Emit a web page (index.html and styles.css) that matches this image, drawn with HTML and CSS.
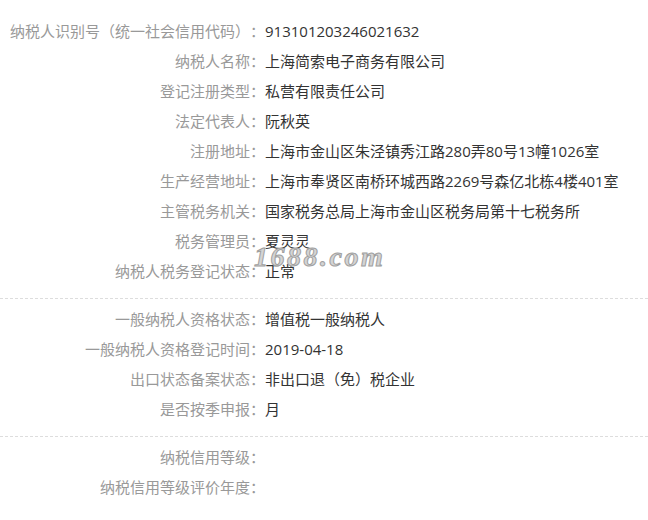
FILE: index.html
```html
<!DOCTYPE html>
<html lang="zh-CN">
<head>
  <meta charset="UTF-8" />
  <title>纳税人信息</title>
  <link rel="stylesheet" href="styles.css">
</head>
<body>

<div class="info">

  <div class="group">
    <div class="row"><span class="label">纳税人识别号（统一社会信用代码）：</span><span class="value">913101203246021632</span></div>
    <div class="row"><span class="label">纳税人名称：</span><span class="value">上海简索电子商务有限公司</span></div>
    <div class="row"><span class="label">登记注册类型：</span><span class="value">私营有限责任公司</span></div>
    <div class="row"><span class="label">法定代表人：</span><span class="value">阮秋英</span></div>
    <div class="row"><span class="label">注册地址：</span><span class="value">上海市金山区朱泾镇秀江路280弄80号13幢1026室</span></div>
    <div class="row"><span class="label">生产经营地址：</span><span class="value">上海市奉贤区南桥环城西路2269号森亿北栋4楼401室</span></div>
    <div class="row"><span class="label">主管税务机关：</span><span class="value">国家税务总局上海市金山区税务局第十七税务所</span></div>
    <div class="row"><span class="label">税务管理员：</span><span class="value">夏灵灵</span></div>
    <div class="row"><span class="label">纳税人税务登记状态：</span><span class="value">正常</span></div>
    <div class="watermark">1688.com</div>
  </div>

  <div class="group">
    <div class="row"><span class="label">一般纳税人资格状态：</span><span class="value">增值税一般纳税人</span></div>
    <div class="row"><span class="label">一般纳税人资格登记时间：</span><span class="value">2019-04-18</span></div>
    <div class="row"><span class="label">出口状态备案状态：</span><span class="value">非出口退（免）税企业</span></div>
    <div class="row"><span class="label">是否按季申报：</span><span class="value">月</span></div>
  </div>

  <div class="group last">
    <div class="row"><span class="label">纳税信用等级：</span><span class="value"></span></div>
    <div class="row"><span class="label">纳税信用等级评价年度：</span><span class="value"></span></div>
  </div>

</div>

</body>
</html>
```

FILE: styles.css
```css
body {
  margin: 0;
  background-color: #ffffff;
  font-family: "Open Sans", "Noto Sans CJK SC", sans-serif;
  font-size: 15px;
  color: #333333;
  text-spacing-trim: space-all;
}

.info {
  width: 648px;
  padding-top: 16px;
}

.group {
  position: relative;
  padding-bottom: 12px;
  margin-bottom: 5px;
  border-bottom: 1px dashed #dddddd;
}

.group.last {
  border-bottom: none;
}

.row {
  display: flex;
  height: 30px;
  line-height: 30px;
}

.label {
  width: 265px;
  text-align: right;
  color: #999999;
  white-space: nowrap;
}

.value {
  color: #333333;
  white-space: nowrap;
}

.watermark {
  position: absolute;
  left: 254px;
  top: 226px;
  font-family: "Liberation Serif", serif;
  font-style: italic;
  font-weight: bold;
  font-size: 28px;
  line-height: 30px;
  letter-spacing: 2.5px;
  color: #d4d4d4;
  -webkit-text-stroke: 1px #a0a0a0;
}
```
